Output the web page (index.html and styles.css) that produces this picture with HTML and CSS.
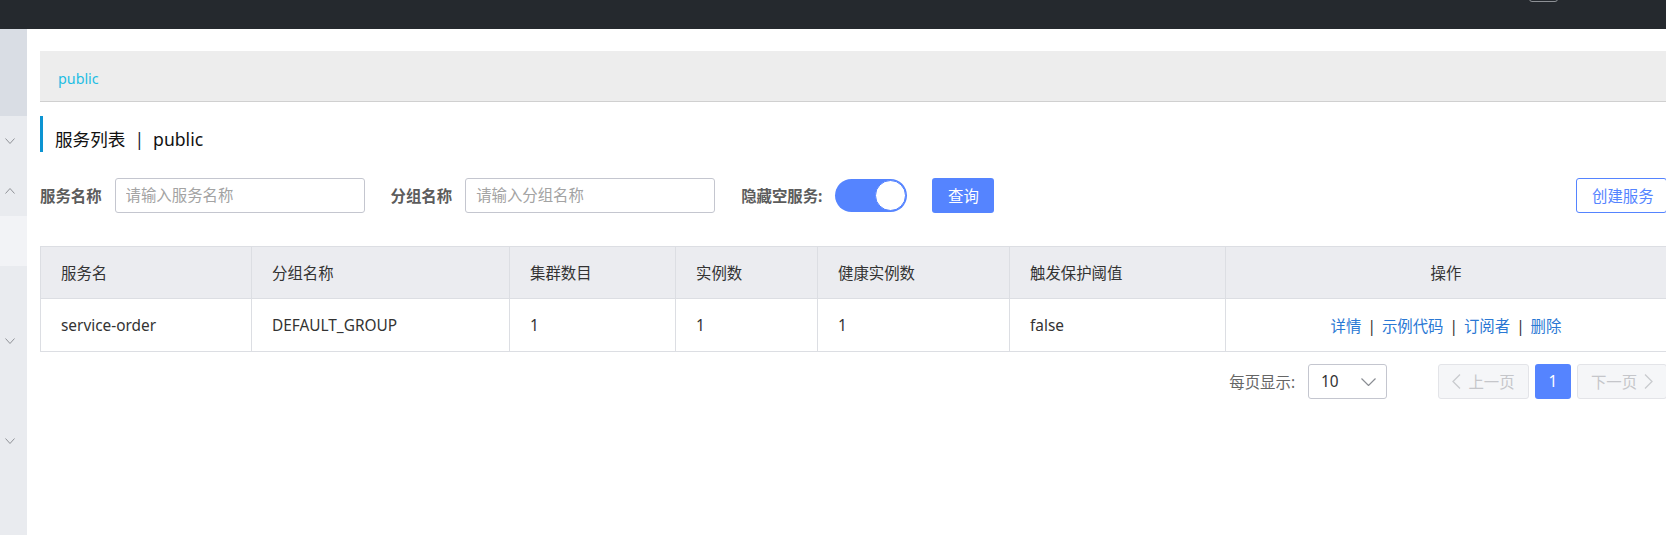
FILE: index.html
```html
<!DOCTYPE html>
<html lang="zh-CN">
<head>
<meta charset="utf-8">
<title>服务列表</title>
<link rel="stylesheet" href="styles.css">
</head>
<body>
<header class="topbar">
  <div class="tb-box"></div>
</header>
<div class="layout">
  <aside class="sidebar">
    <div class="sb-head"></div>
    <div class="sb-item"><svg class="chev" width="10" height="6" viewBox="0 0 10 6"><polyline points="0.5,0.5 5,5.5 9.5,0.5" fill="none" stroke="#8f9297" stroke-width="1"/></svg></div>
    <div class="sb-item"><svg class="chev" width="10" height="6" viewBox="0 0 10 6"><polyline points="0.5,5.5 5,0.5 9.5,5.5" fill="none" stroke="#8f9297" stroke-width="1"/></svg></div>
    <div class="sb-item sb-active"></div>
    <div class="sb-item"></div>
    <div class="sb-item"><svg class="chev" width="10" height="6" viewBox="0 0 10 6"><polyline points="0.5,0.5 5,5.5 9.5,0.5" fill="none" stroke="#8f9297" stroke-width="1"/></svg></div>
    <div class="sb-item"></div>
    <div class="sb-item"><svg class="chev" width="10" height="6" viewBox="0 0 10 6"><polyline points="0.5,0.5 5,5.5 9.5,0.5" fill="none" stroke="#8f9297" stroke-width="1"/></svg></div>
  </aside>
  <main class="main">
    <div class="breadcrumb"><span>public</span></div>
    <div class="title"><span>服务列表</span><span class="title-sep">|</span><span>public</span></div>
    <div class="filters">
      <span class="flabel">服务名称</span>
      <input class="finput" type="text" placeholder="请输入服务名称">
      <span class="flabel">分组名称</span>
      <input class="finput" type="text" placeholder="请输入分组名称">
      <span class="flabel">隐藏空服务:</span>
      <span class="switch"><span class="knob"></span></span>
      <button class="btn-primary">查询</button>
      <button class="btn-outline">创建服务</button>
    </div>
    <table class="grid">
      <colgroup>
        <col class="c1"><col class="c2"><col class="c3"><col class="c4"><col class="c5"><col class="c6"><col>
      </colgroup>
      <thead>
        <tr>
          <th>服务名</th>
          <th>分组名称</th>
          <th>集群数目</th>
          <th>实例数</th>
          <th>健康实例数</th>
          <th>触发保护阈值</th>
          <th class="center">操作</th>
        </tr>
      </thead>
      <tbody>
        <tr>
          <td>service-order</td>
          <td>DEFAULT_GROUP</td>
          <td>1</td>
          <td>1</td>
          <td>1</td>
          <td>false</td>
          <td class="center"><a class="op">详情</a><span class="op-sep">|</span><a class="op">示例代码</a><span class="op-sep">|</span><a class="op">订阅者</a><span class="op-sep">|</span><a class="op">删除</a></td>
        </tr>
      </tbody>
    </table>
    <div class="pager">
      <span class="pg-label">每页显示:</span>
      <div class="pg-select"><span>10</span><svg width="15" height="8" viewBox="0 0 15 8"><polyline points="0.5,0.5 7.5,7.5 14.5,0.5" fill="none" stroke="#8a8d93" stroke-width="1.2"/></svg></div>
      <div class="pg-btn pg-prev"><svg width="9" height="15" viewBox="0 0 9 15"><polyline points="8,0.5 1,7.5 8,14.5" fill="none" stroke="#c9cbcf" stroke-width="1.3"/></svg><span>上一页</span></div>
      <div class="pg-num">1</div>
      <div class="pg-btn pg-next"><span>下一页</span><svg width="9" height="15" viewBox="0 0 9 15"><polyline points="1,0.5 8,7.5 1,14.5" fill="none" stroke="#c9cbcf" stroke-width="1.3"/></svg></div>
    </div>
  </main>
</div>
</body>
</html>
```

FILE: styles.css
```css
html, body {
  margin: 0;
  padding: 0;
}
body {
  width: 1666px;
  height: 535px;
  overflow: hidden;
  background: #ffffff;
  font-family: "Noto Sans", "Noto Sans CJK SC", sans-serif;
  font-size: 15.4px;
  color: #333333;
}

.topbar {
  height: 29px;
  background: #25292e;
  display: flex;
  justify-content: flex-end;
  align-items: flex-start;
}
.tb-box {
  width: 29px;
  height: 10px;
  margin-top: -8px;
  margin-right: 108px;
  border: 1px solid #8d9095;
  border-radius: 3px;
  box-sizing: border-box;
}

.layout {
  display: flex;
  height: 506px;
}

.sidebar {
  width: 27px;
  flex: none;
  background: #e9ebef;
  display: flex;
  flex-direction: column;
}
.sb-head {
  height: 87px;
  background: #d9dde4;
}
.sb-item {
  height: 50px;
  display: flex;
  align-items: center;
  padding-left: 5px;
}
.sb-active {
  background: #f2f3f6;
}
.chev {
  display: block;
}

.main {
  flex: 1;
  min-width: 0;
  margin-right: -1px;
  padding: 22px 0 0 13px;
}

.breadcrumb {
  height: 50px;
  box-sizing: border-box;
  height: 51px;
  background: #ededed;
  border-bottom: 1px solid #d0d0d0;
  display: flex;
  align-items: center;
  padding: 4px 0 0 18px;
  font-size: 14.3px;
  color: #1ebde3;
}

.title {
  margin-top: 14px;
  height: 36px;
  box-sizing: border-box;
  border-left: 3px solid #0c94d2;
  padding: 11px 0 0 12px;
  line-height: 25px;
  font-size: 17.6px;
  color: #111111;
  display: flex;
}
.title-sep {
  margin: 0 9px;
  color: #1a2540;
}

.filters {
  margin-top: 26px;
  height: 35px;
  display: flex;
  align-items: center;
}
.flabel {
  font-weight: bold;
  color: #5c5c5c;
  margin-right: 13px;
  white-space: nowrap;
}
.finput {
  width: 250px;
  height: 35px;
  box-sizing: border-box;
  border: 1px solid #c4c6cf;
  border-radius: 3px;
  padding: 0 10px;
  margin: 0 26px 0 0;
  font-family: inherit;
  font-size: 15.4px;
  color: #333333;
  outline: none;
}
.finput::placeholder {
  color: #a3a3a3;
}
.switch {
  width: 72px;
  height: 33px;
  box-sizing: border-box;
  border-radius: 17px;
  background: #5584ff;
  display: flex;
  justify-content: flex-end;
  align-items: center;
  padding: 1px;
  margin-right: 25px;
}
.knob {
  width: 31px;
  height: 31px;
  box-sizing: border-box;
  border-radius: 50%;
  background: #ffffff;
  border: 1px solid #5584ff;
}
.btn-primary {
  width: 62px;
  height: 35px;
  border: none;
  border-radius: 3px;
  background: #5584ff;
  color: #ffffff;
  font-family: inherit;
  font-size: 15.4px;
  padding: 0;
}
.btn-outline {
  margin-left: auto;
  width: 91px;
  height: 35px;
  box-sizing: border-box;
  border: 1px solid #5584ff;
  border-radius: 3px;
  background: #ffffff;
  color: #5584ff;
  font-family: inherit;
  font-size: 15.4px;
  text-align: left;
  padding: 0 0 0 15px;
}

.grid {
  margin-top: 33px;
  width: 100%;
  table-layout: fixed;
  border-collapse: collapse;
  border: 1px solid #dcdee3;
}
.grid col.c1 { width: 211px; }
.grid col.c2 { width: 258px; }
.grid col.c3 { width: 166px; }
.grid col.c4 { width: 142px; }
.grid col.c5 { width: 192px; }
.grid col.c6 { width: 216px; }
.grid th,
.grid td {
  border: 1px solid #dcdee3;
  padding: 0 0 0 20px;
  text-align: left;
  font-weight: normal;
  color: #333333;
  white-space: nowrap;
}
.grid th {
  height: 51px;
  background: #ebecf0;
}
.grid td {
  height: 52px;
  background: #ffffff;
}
.grid .center {
  text-align: center;
  padding: 0;
}
.op {
  color: #2a78d4;
  text-decoration: none;
}
.op-sep {
  margin: 0 6px;
  color: #333333;
}

.pager {
  margin-top: 12px;
  height: 35px;
  display: flex;
  justify-content: flex-end;
  align-items: center;
}
.pg-label {
  color: #666666;
  margin-right: 13px;
}
.pg-select {
  width: 79px;
  height: 35px;
  box-sizing: border-box;
  border: 1px solid #c4c6cf;
  border-radius: 3px;
  display: flex;
  align-items: center;
  justify-content: space-between;
  padding: 0 10px 0 12px;
  color: #333333;
  margin-right: 51px;
}
.pg-btn {
  width: 91px;
  height: 35px;
  box-sizing: border-box;
  background: #f5f6f8;
  border: 1px solid #e3e4e8;
  border-radius: 3px;
  color: #c5c6ca;
  display: flex;
  align-items: center;
  justify-content: center;
  gap: 7px;
}
.pg-num {
  width: 36px;
  height: 35px;
  margin: 0 6px;
  border-radius: 3px;
  background: #5584ff;
  color: #ffffff;
  display: flex;
  align-items: center;
  justify-content: center;
}
.pg-next {
  width: 90px;
}
```
